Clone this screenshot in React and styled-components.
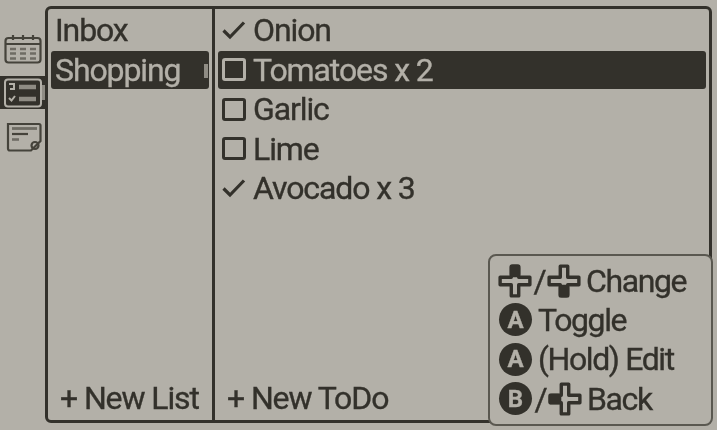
import React from 'react'
import styled, {createGlobalStyle} from 'styled-components'

const INK = '#33312b'
const PAPER = '#b3b0a8'

const lists = [
    {name: 'Inbox'},
    {name: 'Shopping', selected: true},
]

const todos = [
    {name: 'Onion', done: true},
    {name: 'Tomatoes x 2', selected: true},
    {name: 'Garlic'},
    {name: 'Lime'},
    {name: 'Avocado x 3', done: true},
]

const CalendarIcon = () => (
    <svg width="38" height="30" viewBox="0 0 38 30" fill="none" stroke="#45433b" strokeWidth="2.2">
        <rect x="1.5" y="4" width="35" height="24.5" rx="3" />
        <path d="M2 10H36" />
        <path d="M9 1V6M19 1V6M29 1V6" />
        <path d="M6 15H12M16 15H22M26 15H32M6 19.5H12M16 19.5H22M26 19.5H32M6 24.5H12M16 24.5H22M26 24.5H32" strokeWidth="2.4" stroke="#6f6c64" />
    </svg>
)

const TodoIcon = () => (
    <svg width="38" height="30" viewBox="0 0 38 30" fill="none" stroke={PAPER} strokeWidth="2">
        <rect x="1" y="1.5" width="36" height="27" rx="3" />
        <path d="M5 6H10V11H6" />
        <path d="M5 20L7.5 22.5L11 18" />
        <path d="M15 9H32M15 21H32" strokeWidth="4.5" stroke="#8f8c84" />
    </svg>
)

const NoteIcon = () => (
    <svg width="38" height="30" viewBox="0 0 38 30" fill="none" stroke="#45433b" strokeWidth="2.2">
        <path d="M4 2H35A1.5 1.5 0 0 1 36.5 3.5V19L27 28.5H6A2 2 0 0 1 4 26.5Z" />
        <circle cx="31" cy="23.5" r="3.5" />
        <path d="M8 6.5H33" strokeWidth="2.8" stroke="#6f6c64" />
        <path d="M8 12H24" strokeWidth="2.2" />
        <path d="M8 17.5H15" strokeWidth="2.6" stroke="#6f6c64" />
    </svg>
)

const CheckIcon = () => (
    <svg width="24" height="20" viewBox="0 0 24 20" fill="none" stroke={INK} strokeWidth="3.2">
        <path d="M1.5 10.5L8 17L22 2.5" />
    </svg>
)

const DPAD = 'M12.5 2H19.5V12.5H30V19.5H19.5V30H12.5V19.5H2V12.5H12.5Z'

// side: part of the cross that is filled in
const DPad = ({side}) => (
    <DPadSvg viewBox="0 0 32 32">
        <path d={DPAD} fill="none" stroke={INK} strokeWidth="3.2" strokeLinejoin="round" />
        {side === 'up' && <rect x="11" y="0.5" width="10" height="12" rx="3" fill={INK} />}
        {side === 'down' && <rect x="11" y="19.5" width="10" height="12" rx="3" fill={INK} />}
        {side === 'left' && <rect x="0.5" y="11" width="12" height="10" rx="3" fill={INK} />}
    </DPadSvg>
)

export default function App() {
    return (
        <Screen>
            <GlobalStyle />
            <Sidebar>
                <TabIcon><CalendarIcon /></TabIcon>
                <TabIcon active><TodoIcon /><TabNotch /></TabIcon>
                <TabIcon><NoteIcon /></TabIcon>
            </Sidebar>
            <Panel>
                <ListColumn>
                    <Rows>
                        {lists.map((list) => (
                            <ListRow key={list.name} selected={list.selected}>
                                {list.name}
                                {list.selected && <Scroll />}
                            </ListRow>
                        ))}
                    </Rows>
                    <NewLabel>+ New List</NewLabel>
                </ListColumn>
                <TodoColumn>
                    <Rows>
                        {todos.map((todo) => (
                            <TodoRow key={todo.name} selected={todo.selected}>
                                <Mark>
                                    {todo.done ? <CheckIcon /> : <Box selected={todo.selected} />}
                                </Mark>
                                {todo.name}
                            </TodoRow>
                        ))}
                    </Rows>
                    <NewLabel>+ New ToDo</NewLabel>
                </TodoColumn>
            </Panel>
            <Help>
                <HelpRow><DPad side="up" /><Slash>/</Slash><DPad side="down" /><HelpText>Change</HelpText></HelpRow>
                <HelpRow><Pad>A</Pad><HelpText>Toggle</HelpText></HelpRow>
                <HelpRow><Pad>A</Pad><HelpText>(Hold) Edit</HelpText></HelpRow>
                <HelpRow><Pad>B</Pad><Slash>/</Slash><DPad side="left" /><HelpText>Back</HelpText></HelpRow>
            </Help>
        </Screen>
    )
}

const GlobalStyle = createGlobalStyle`
    html, body {
        margin: 0;
        padding: 0;
        background: ${PAPER};
        overflow: hidden;
    }
`

const Screen = styled.div`
    position: relative;
    display: flex;
    box-sizing: border-box;
    width: 717px;
    height: 430px;
    padding: 6px 5px 7px 0;
    background: ${PAPER};
    color: ${INK};
    font-family: Roboto, "Liberation Sans", sans-serif;
    font-size: 32px;
    font-weight: 400;
    letter-spacing: -1.1px;
    -webkit-text-stroke: 0.35px currentColor;
    filter: blur(0.7px);
`

const Sidebar = styled.div`
    display: flex;
    flex-direction: column;
    gap: 11px;
    width: 45px;
    padding-top: 26px;
    flex-shrink: 0;
`

const TabIcon = styled.div`
    position: relative;
    display: flex;
    align-items: center;
    height: 33px;
    padding-left: 4px;
    background: ${(p) => (p.active ? INK : 'transparent')};
`

const TabNotch = styled.div`
    position: absolute;
    right: 0;
    top: 9px;
    width: 3px;
    height: 15px;
    background: #8f8c84;
`

const Panel = styled.div`
    flex: 1;
    display: flex;
    box-sizing: border-box;
    border: 3px solid ${INK};
    border-radius: 6px;
`

const ListColumn = styled.div`
    display: flex;
    flex-direction: column;
    width: 167px;
    flex-shrink: 0;
    box-sizing: border-box;
    padding: 2px 3px 3px 3px;
    border-right: 3px solid ${INK};
`

const TodoColumn = styled.div`
    flex: 1;
    display: flex;
    flex-direction: column;
    box-sizing: border-box;
    padding: 2px 3px 3px 3px;
`

const Rows = styled.div`
    display: flex;
    flex-direction: column;
    flex: 1;
    gap: 1px;
`

const Row = styled.div`
    position: relative;
    display: flex;
    align-items: center;
    height: 38.5px;
    border-radius: 3px;
    white-space: nowrap;
    background: ${(p) => (p.selected ? INK : 'transparent')};
    color: ${(p) => (p.selected ? PAPER : INK)};
`

const ListRow = styled(Row)`
    padding-left: 4px;
`

const TodoRow = styled(Row)`
    padding-left: 2px;
`

const Scroll = styled.div`
    position: absolute;
    right: 1px;
    top: 13px;
    width: 4px;
    height: 14px;
    background: #8f8c84;
`

const Mark = styled.div`
    display: flex;
    align-items: center;
    justify-content: center;
    width: 26px;
    margin-right: 6px;
    margin-left: 1px;
`

const Box = styled.div`
    box-sizing: border-box;
    width: 24px;
    height: 23px;
    border: 3px solid ${(p) => (p.selected ? PAPER : INK)};
    border-radius: 3px;
`

const NewLabel = styled.div`
    height: 38px;
    display: flex;
    align-items: center;
    padding-left: 9px;
    white-space: nowrap;
`

const Help = styled.div`
    position: absolute;
    right: 4px;
    bottom: 4px;
    box-sizing: border-box;
    width: 225px;
    height: 172px;
    padding: 5px 0 0 8px;
    background: ${PAPER};
    border: 2px solid #5a5850;
    border-radius: 8px;
    letter-spacing: -1.4px;
`

const HelpRow = styled.div`
    display: flex;
    align-items: center;
    height: 39.3px;
    white-space: nowrap;
`

const HelpText = styled.span`
    margin-left: 5px;
`

const Slash = styled.span`
    display: flex;
    justify-content: center;
    width: 15px;
`

const DPadSvg = styled.svg`
    width: 34px;
    height: 34px;
    flex-shrink: 0;
`

const Pad = styled.div`
    display: flex;
    align-items: center;
    justify-content: center;
    width: 33px;
    height: 33px;
    margin: 0 1px;
    border-radius: 50%;
    flex-shrink: 0;
    background: ${INK};
    color: ${PAPER};
    font-size: 24px;
    font-weight: 700;
    letter-spacing: 0;
`
